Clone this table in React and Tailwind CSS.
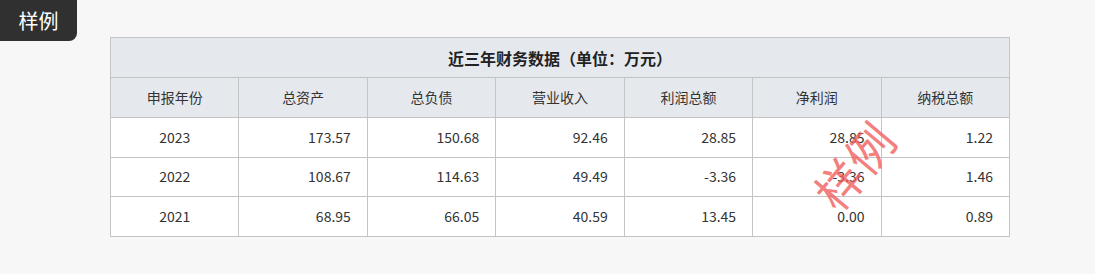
import React from "react";

const headers = ["申报年份", "总资产", "总负债", "营业收入", "利润总额", "净利润", "纳税总额"];
const rows = [
  ["2023", "173.57", "150.68", "92.46", "28.85", "28.85", "1.22"],
  ["2022", "108.67", "114.63", "49.49", "-3.36", "-3.36", "1.46"],
  ["2021", "68.95", "66.05", "40.59", "13.45", "0.00", "0.89"],
];

export default function App() {
  return (
    <div
      className="relative w-[1095px] h-[274px] bg-[#f7f7f7] overflow-hidden text-[#333]"
      style={{ fontFamily: '"Noto Sans CJK SC", "Noto Sans", sans-serif' }}
    >
      <div className="absolute left-0 top-0 w-[77px] h-[41px] bg-[#303030] rounded-br-[8px] flex items-center justify-center text-white text-[20px] leading-none">
        样例
      </div>
      <div className="pt-[37px] pl-[110px]">
        <table className="w-[900px] table-fixed border-collapse text-[14px]">
          <thead>
            <tr className="h-[40px] bg-[#e5e9ee]">
              <th colSpan={7} className="border border-[#c4c4c4] text-[16px] font-bold text-[#222]">
                近三年财务数据（单位：万元）
              </th>
            </tr>
            <tr className="h-[40px] bg-[#e5e9ee]">
              {headers.map((h) => (
                <th key={h} className="border border-[#c4c4c4] font-normal text-center">
                  {h}
                </th>
              ))}
            </tr>
          </thead>
          <tbody>
            {rows.map((r) => (
              <tr key={r[0]} className="h-[39.6px] bg-white">
                {r.map((c, i) => (
                  <td
                    key={i}
                    className={
                      i === 0
                        ? "border border-[#c4c4c4] text-center"
                        : "border border-[#c4c4c4] text-right pr-[16px]"
                    }
                  >
                    {c}
                  </td>
                ))}
              </tr>
            ))}
          </tbody>
        </table>
      </div>
      <div className="absolute left-[853px] top-[165px] -translate-x-1/2 -translate-y-1/2 -rotate-[50deg] text-[47px] leading-none text-[#f25c5c]/80 pointer-events-none">
        样例
      </div>
    </div>
  );
}
